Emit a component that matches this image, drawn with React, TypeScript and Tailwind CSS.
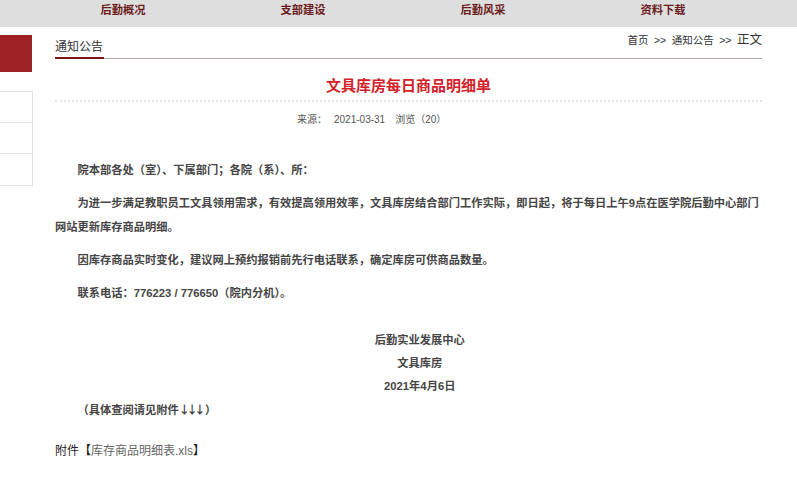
const navItems = ['后勤概况', '支部建设', '后勤风采', '资料下载']

const font = "font-['Liberation_Sans','Noto_Sans_CJK_SC',sans-serif]"

export default function App() {
  return (
    <div className={`w-[797px] h-[486px] overflow-hidden bg-white ${font}`}>
      {/* top nav */}
      <div className="h-[27px] bg-[#dedede] flex pl-[33px]">
        {navItems.map((n) => (
          <div key={n} className="w-[180px] text-center text-[11.25px] leading-[20px] font-bold text-[#6b1c1c]">
            {n}
          </div>
        ))}
      </div>

      <div className="flex">
        {/* left sidebar */}
        <div className="w-[33px] shrink-0 pt-[8px]">
          <div className="h-[37px] w-[32px] bg-[#9b2124]" />
          <div className="mt-[19px] border border-l-0 border-[#e2e2e2] divide-y divide-[#e2e2e2]">
            <div className="h-[31px]" />
            <div className="h-[31px]" />
            <div className="h-[31px]" />
          </div>
        </div>

        {/* main */}
        <div className="ml-[22px] w-[707px]">
          <div className="mt-[5px] h-[27px] flex justify-between border-b border-[#b9a7a7]">
            <div className="self-end border-b-2 border-[#7a1313] -mb-px text-[12px] leading-[20px] text-[#333] pr-[1px]">
              通知公告
            </div>
            <div className="self-start flex items-baseline gap-[5.5px] text-[10.5px] leading-[16px] text-[#333]">
              <span>首页</span>
              <span>&gt;&gt;</span>
              <span>通知公告</span>
              <span>&gt;&gt;</span>
              <span className="text-[12.5px]">正文</span>
            </div>
          </div>

          <h1 className="mt-[17px] text-center text-[15px] leading-[20px] font-bold text-[#d3222a]">
            文具库房每日商品明细单
          </h1>
          <div className="mt-[4px] border-t-2 border-dotted border-[#e4e4e4]" />

          <div className="mt-[10px] pl-[242px] flex gap-[7px] text-[10px] leading-[16px] text-[#555]">
            <span>来源：</span>
            <span>2021-03-31</span>
            <span className="ml-[3px]">浏览（20）</span>
          </div>

          <div className="mt-[31px] text-[11.25px] font-bold text-[#454545] leading-[23.5px] space-y-[9.5px] [&>p]:indent-[2em]">
            <p>院本部各处（室）、下属部门；各院（系）、所：</p>
            <p>
              为进一步满足教职员工文具领用需求，有效提高领用效率，文具库房结合部门工作实际，即日起，将于每日上午9点在医学院后勤中心部门网站更新库存商品明细。
            </p>
            <p>因库存商品实时变化，建议网上预约报销前先行电话联系，确定库房可供商品数量。</p>
            <p>联系电话：776223 / 776650（院内分机）。</p>
          </div>

          <div className="mt-[24px] text-[11.25px] font-bold text-[#454545] leading-[23px] [&>p]:indent-[2em]">
            <p className="text-center">后勤实业发展中心</p>
            <p className="text-center">文具库房</p>
            <p className="text-center">2021年4月6日</p>
            <p>
              （具体查阅请见附件
              <span className="font-['Noto_Sans_CJK_SC',sans-serif] tracking-[-3.5px]">↓↓↓</span>
              <span className="ml-[3px]">）</span>
            </p>
          </div>

          <div className="mt-[19px] text-[12px] leading-[20px] text-[#222]">
            附件【<span className="text-[#666]">库存商品明细表.xls</span>】
          </div>
        </div>
      </div>
    </div>
  )
}
